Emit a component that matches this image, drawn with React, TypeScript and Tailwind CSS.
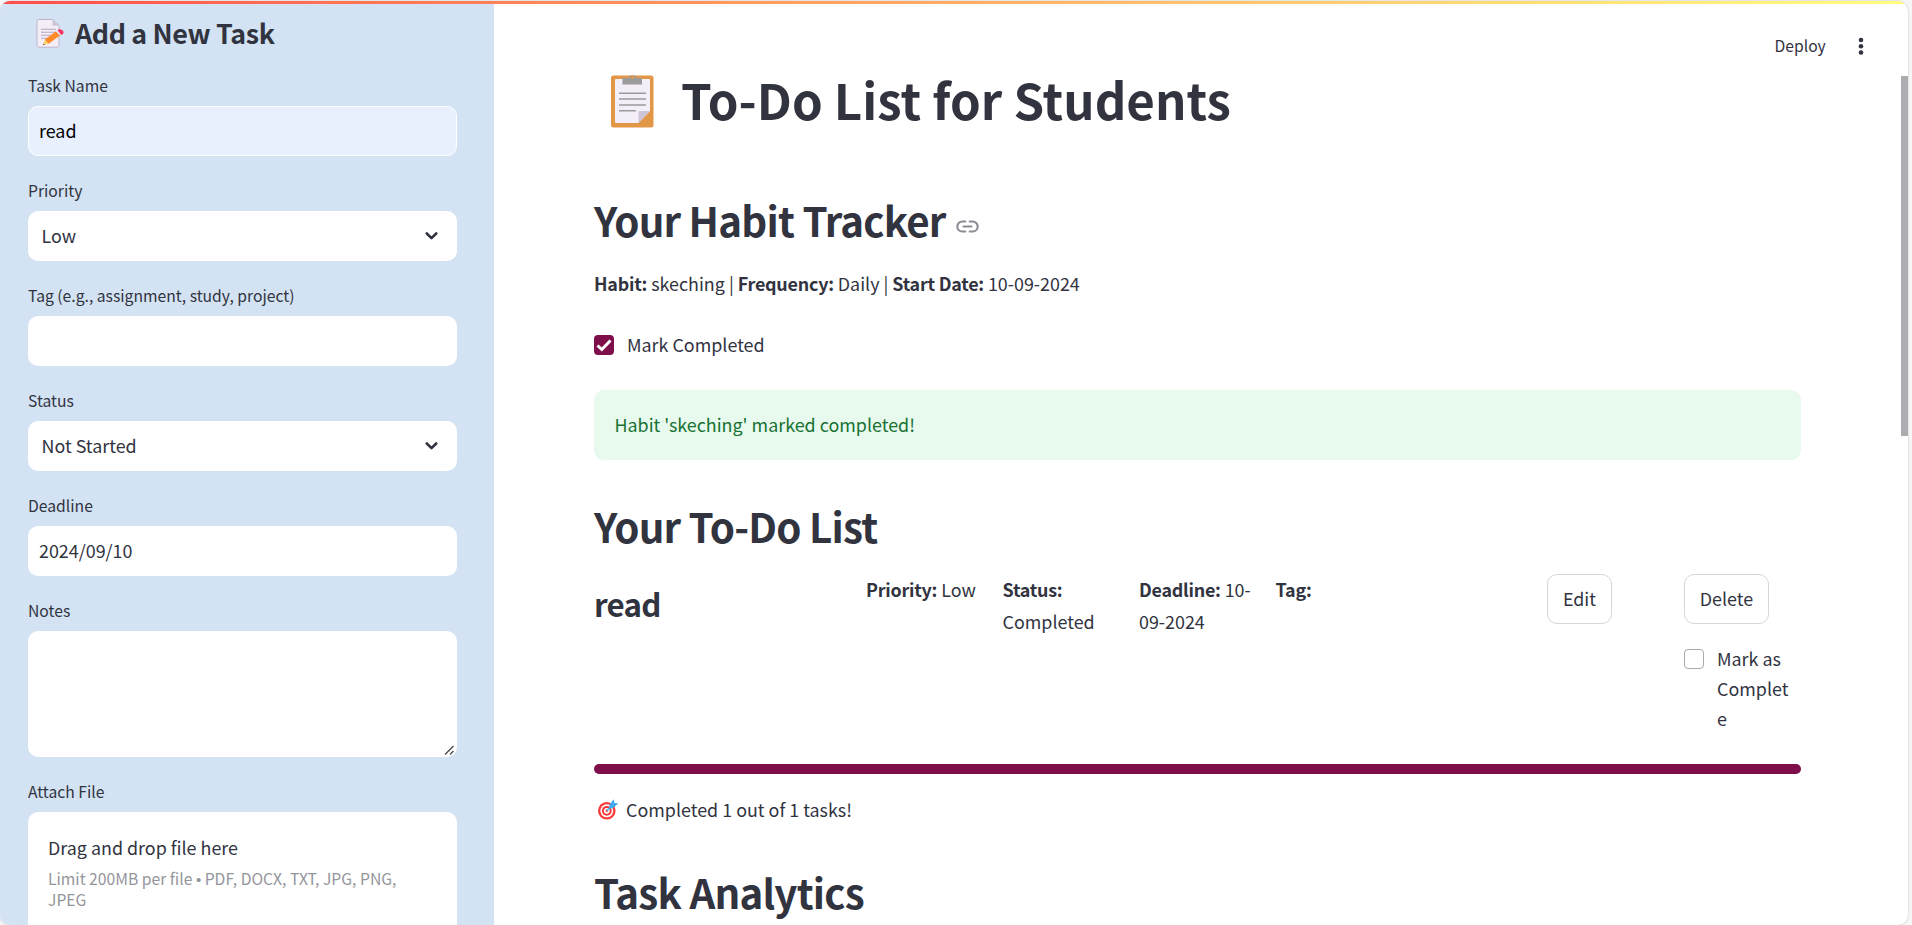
import React from "react";

function Label({ children }: { children: React.ReactNode }) {
  return <div className="flex h-8 items-start text-[15.7px] leading-[24px]">{children}</div>;
}

function Chevron() {
  return (
    <svg width="13" height="9" viewBox="0 0 13 9" fill="none" stroke="#31333f" strokeWidth="2.6" strokeLinecap="round" strokeLinejoin="round" className="mt-[2px]">
      <path d="M1.800 1.500l4.700 4.600L11.200 1.500" />
    </svg>
  );
}

function Field({ label, children }: { label: string; children?: React.ReactNode }) {
  return (
    <div className="mb-[23px]">
      <Label>{label}</Label>
      {children}
    </div>
  );
}

function Select({ value }: { value: string }) {
  return (
    <div className="flex h-[50px] items-center justify-between rounded-[10px] bg-white pr-[19.500px] pb-[2px] pl-[13.500px] text-[17.900px]">
      <span>{value}</span>
      <Chevron />
    </div>
  );
}

function Memo() {
  return (
    <svg width="29" height="31" viewBox="0 0 29 31" className="shrink-0">
      <path d="M2.500 1.500h14.300l6.200 6v20.200a1.500 1.500 0 0 1-1.500 1.500H2.500A1.500 1.500 0 0 1 1 27.700V3a1.500 1.500 0 0 1 1.500-1.500z" fill="#f3eef8" stroke="#bdb4cb" strokeWidth="1" />
      <path d="M16.500 1.500l6.500 6.200h-6.500z" fill="#cdc4d6" />
      <path d="M5 11.300h15M5 14.200h15M5 17.200h10M5 20.200h7" stroke="#b2a9bd" strokeWidth="1.100" />
      <path d="M7 27.200l1.800-5.700 3.900 4.300z" fill="#fcd065" />
      <path d="M7 27.200l.5-1.600 1.200 1.200z" fill="#433b6b" />
      <path d="M8.800 21.500L20 13.200l4 4.400-11.300 8.200z" fill="#ff8a2a" />
      <path d="M20 13.200l1.700-1.200 3.800 4.400-1.500 1.200z" fill="#e9e2f0" />
      <path d="M21.500 12.100c3-2.600 7.800 1.300 5.400 3.800l-1.700 1.200z" fill="#f8315f" />
    </svg>
  );
}

function Clipboard() {
  return (
    <svg width="43" height="53" viewBox="0 0 43 53" className="shrink-0">
      <rect x="0" y="0.500" width="42.500" height="52" rx="2.500" fill="#e19747" />
      <path d="M5 4h33a1 1 0 0 1 1 1v31L27.500 48H5a1 1 0 0 1-1-1V5a1 1 0 0 1 1-1z" fill="#f3eef8" />
      <path d="M27.500 48V37.500a1.500 1.500 0 0 1 1.500-1.500h10z" fill="#cdc4d6" />
      <path d="M11.500 3h5.500c1 0 1.500-.8 1.800-2.500h5.400C24.500 2.200 25 3 26 3h3.500a1.500 1.500 0 0 1 1.500 1.500V9.500H11.500z" fill="#9b9b9b" />
      <circle cx="21.300" cy="2.200" r="1.700" fill="#e19747" />
      <path d="M8 18.300h27M8 24h27M8 30h27M8 35.700h17" stroke="#9b9b9b" strokeWidth="1.500" />
    </svg>
  );
}

function Target() {
  return (
    <svg width="21" height="21" viewBox="0 0 21 21" className="shrink-0">
      <circle cx="8.800" cy="11.800" r="8.800" fill="#fb3b3b" />
      <circle cx="8.800" cy="11.800" r="6.500" fill="#fff" />
      <circle cx="8.800" cy="11.800" r="4.900" fill="#fb3b3b" />
      <circle cx="8.800" cy="11.800" r="2.900" fill="#fff" />
      <circle cx="8.800" cy="11.800" r="1.300" fill="#fb3b3b" />
      <path d="M8.800 11.800L15 5.600" stroke="#26c9fc" strokeWidth="1.400" />
      <path d="M11.500 5.800L15.700 0.300l.8 3.600 3.900.6-5.700 4.800-3.400.3z" fill="#3fa9f2" />
    </svg>
  );
}

function LinkIcon() {
  return (
    <svg width="23" height="13" viewBox="0 0 23 13" fill="none" stroke="#8b8c94" strokeWidth="2.100" strokeLinecap="round">
      <path d="M9.300 1.500H6.300a5 5 0 0 0 0 10h3M13.700 1.500h3a5 5 0 0 1 0 10h-3M7.500 6.500h8" />
    </svg>
  );
}

function B({ children }: { children: React.ReactNode }) {
  return <b className="font-semibold tracking-[-0.013em]">{children}</b>;
}

const h2 = "text-[40.300px] font-semibold tracking-[-0.02em]";

export default function App() {
  return (
    <div className="flex h-[925px] w-[1912px] overflow-hidden bg-[#f6f6f7] pt-px font-['Noto_Sans_CJK_SC',sans-serif] text-[#31333f]">
      <div className="relative flex h-[924px] w-[1908px] overflow-hidden rounded-[10px] bg-white shadow-[0_0_2px_#bbbbbb]">
        <aside className="w-[494px] shrink-0 overflow-hidden bg-[#d3e3f3] pr-[37px] pl-7">
          <div className="flex h-[73px] items-start pt-[17px] pl-[8px]">
            <Memo />
            <h2 className="ml-[10px] -mt-[3px] text-[26.900px] leading-[36px] font-semibold tracking-[-0.015em] whitespace-nowrap">Add a New Task</h2>
          </div>
          <Field label="Task Name">
            <div className="flex h-[50px] items-center rounded-[10px] border border-white bg-[#e8f0fe] px-[10px] pb-[2px] text-[17.900px] text-black">read</div>
          </Field>
          <Field label="Priority"><Select value="Low" /></Field>
          <Field label="Tag (e.g., assignment, study, project)">
            <div className="h-[50px] rounded-[10px] bg-white" />
          </Field>
          <Field label="Status"><Select value="Not Started" /></Field>
          <Field label="Deadline">
            <div className="flex h-[50px] items-center rounded-[10px] bg-white px-[11px] pb-[2px] text-[17.900px]">2024/09/10</div>
          </Field>
          <Field label="Notes">
            <div className="flex h-[126px] items-end justify-end rounded-[10px] bg-white pr-[3px] pb-[2px]">
              <svg width="10" height="10" viewBox="0 0 10 10" stroke="#4a4a4a" strokeWidth="1.400"><path d="M1 9.500L9.500 1M6 9.500L9.500 6" /></svg>
            </div>
          </Field>
          <Field label="Attach File">
            <div className="h-[180px] rounded-[10px] bg-white pt-[19px] pl-[20px]">
              <div className="text-[17.900px] leading-[32px]">Drag and drop file here</div>
              <div className="mt-[5px] text-[15.700px] leading-[21px] text-[#94959b]">Limit 200MB per file <span className="font-['Liberation_Sans',sans-serif] text-[15px] leading-none">•</span> PDF, DOCX, TXT, JPG, PNG,<br />JPEG</div>
            </div>
          </Field>
        </aside>

        <main className="flex flex-1 flex-col pl-[100px] text-[17.900px]">
          <header className="flex h-[64px] items-start pt-[33px] pl-[1180.500px]">
            <span className="w-[81px] text-[15.700px] leading-[24px]">Deploy</span>
            <svg width="10" height="20" viewBox="0 0 10 20" fill="#31333f" className="mt-[2px]"><circle cx="5" cy="4" r="2.300" /><circle cx="5" cy="10.300" r="2.300" /><circle cx="5" cy="16.500" r="2.300" /></svg>
          </header>
          <div className="flex h-[123px] items-start pt-[10px] pl-[17px]">
            <Clipboard />
            <h1 className="ml-[27px] -mt-[9px] text-[49.200px] leading-[66px] font-bold whitespace-nowrap">To-Do List for Students</h1>
          </div>
          <div className="flex h-[77px] items-start gap-[10px]">
            <h2 className={h2 + " leading-[64px] whitespace-nowrap"}>Your Habit Tracker</h2>
            <div className="mt-[32px]"><LinkIcon /></div>
          </div>
          <p className="h-[70px] leading-[36px] whitespace-nowrap"><B>Habit:</B> skeching | <B>Frequency:</B> Daily | <B>Start Date:</B> 10-09-2024</p>
          <div className="flex h-[55px] items-start gap-[13px]">
            <span className="flex size-5 items-center justify-center rounded-[4px] bg-[#7f0f4b]">
              <svg width="16" height="13" viewBox="0 0 16 13" fill="none" stroke="#fff" strokeWidth="3"><path d="M1.500 6.500l4.300 4L14.500 1.500" /></svg>
            </span>
            <span className="-mt-[4px] leading-[26px]">Mark Completed</span>
          </div>
          <div className="flex h-[70px] w-[1207px] items-center rounded-[10px] bg-[#e8f9ee] pb-[2px] pl-[20.500px] text-[#177233]">Habit 'skeching' marked completed!</div>
          <h2 className={h2 + " mt-[34px] h-[80px] leading-[64px]"}>Your To-Do List</h2>
          <div className="flex h-[190px] w-[1207px] gap-5 leading-[32px]">
            <h3 className="w-[252px] pt-[8px] text-[31.300px] leading-[44px] font-semibold tracking-[-0.025em]">read</h3>
            <p className="-mt-px w-[116.500px] whitespace-nowrap"><B>Priority:</B> Low</p>
            <p className="-mt-px w-[116.500px]"><B>Status:</B><br />Completed</p>
            <p className="-mt-px w-[116.500px] whitespace-nowrap"><B>Deadline:</B> 10-<br />09-2024</p>
            <p className="-mt-px w-[252px]"><B>Tag:</B></p>
            <div className="w-[116.500px]"><button className="-ml-px block h-[50px] w-[65px] rounded-[10px] border border-[#d6d6d9] pb-[2px] pl-px">Edit</button></div>
            <div className="w-[117px]">
              <button className="block h-[50px] w-[85px] rounded-[10px] border border-[#d6d6d9] pb-[2px]">Delete</button>
              <div className="mt-[25px] flex gap-[13px]">
                <span className="size-5 shrink-0 rounded-[4px] border border-[#a8a9ae]" />
                <span className="-mt-[6px] leading-[30px]">Mark as<br />Complet<br />e</span>
              </div>
            </div>
          </div>
          <div className="h-[10px] w-[1207px] shrink-0 rounded-full bg-[#7f0f4b]" />
          <div className="mt-[25px] flex h-[61px] items-start gap-[7px] pl-[4px]">
            <Target />
            <span className="-mt-[6px] leading-[32px]">Completed 1 out of 1 tasks!</span>
          </div>
          <h2 className={h2 + " leading-[64px]"}>Task Analytics</h2>
        </main>
        <div className="absolute top-0 left-0 h-[3px] w-full bg-linear-to-r from-[#ff4b4b] to-[#fffd80]" />
        <div className="absolute top-[75px] right-0 h-[360px] w-[7px] bg-[#acacb1]" />
      </div>
    </div>
  );
}
